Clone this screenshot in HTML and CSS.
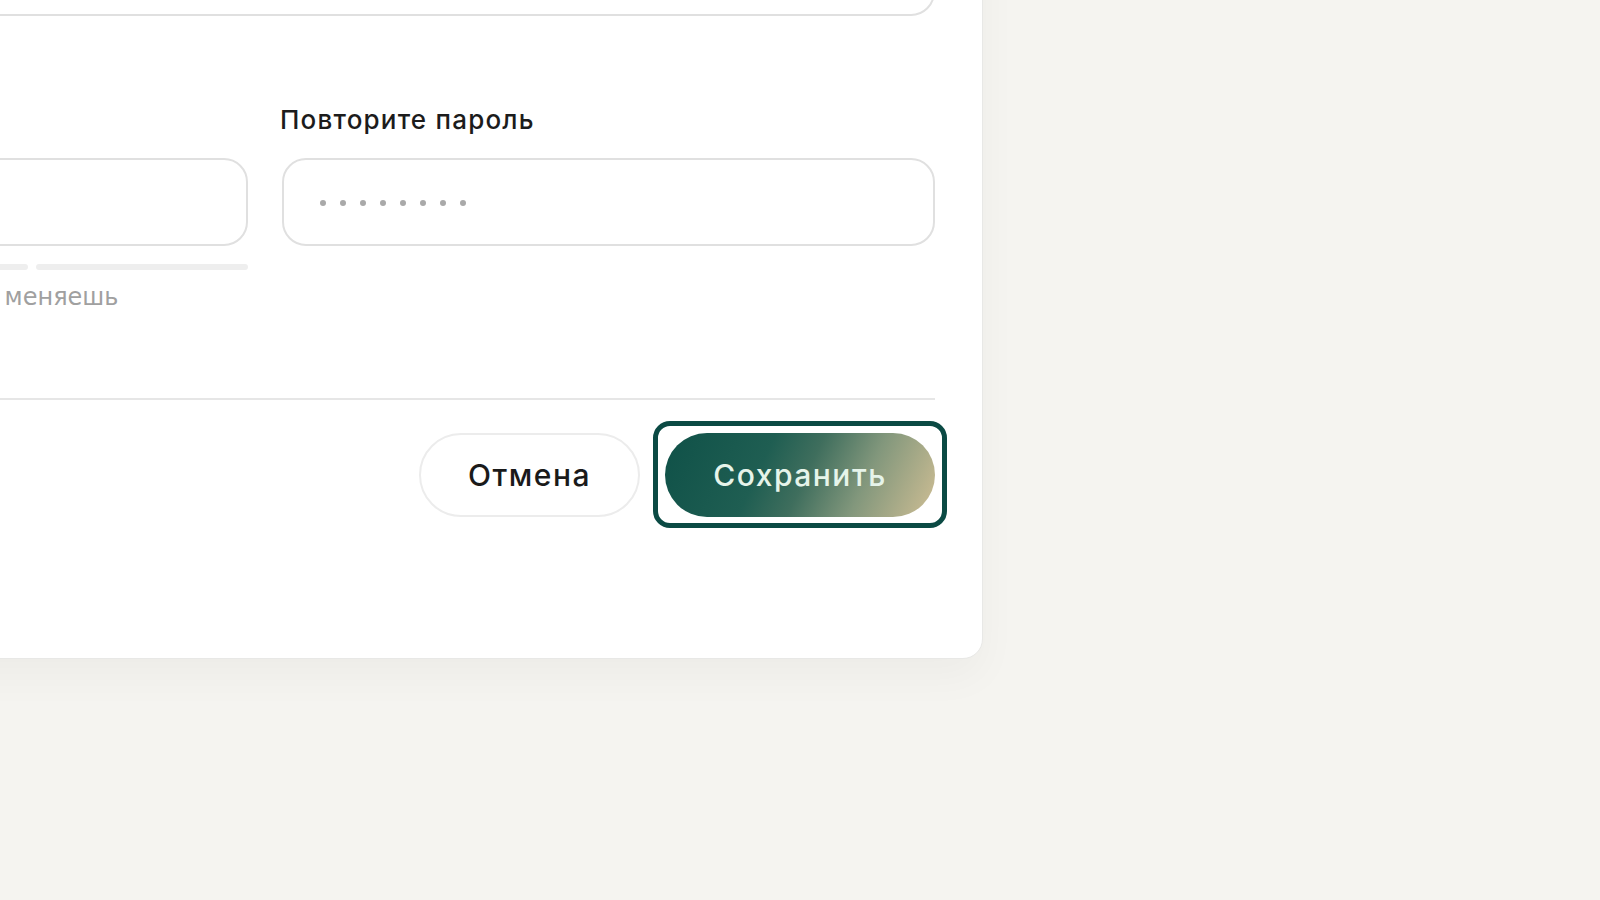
FILE: index.html
```html
<!DOCTYPE html>
<html lang="ru">
<head>
<meta charset="utf-8">
<title>Смена пароля</title>
<link rel="stylesheet" href="styles.css">
</head>
<body>
<div class="stage">
  <section class="card">
    <div class="field">
      <label class="label">Текущий пароль</label>
      <div class="input"></div>
    </div>
    <div class="grid">
      <div class="field">
        <label class="label">Новый пароль</label>
        <div class="input">
          <span class="dots"><i></i><i></i><i></i><i></i><i></i><i></i><i></i><i></i></span>
        </div>
        <div class="strength">
          <span class="seg seg-on"></span>
          <span class="seg"></span>
          <span class="seg"></span>
        </div>
        <p class="hint">Не используй пароль, который меняешь</p>
      </div>
      <div class="field">
        <label class="label">Повторите пароль</label>
        <div class="input">
          <span class="dots"><i></i><i></i><i></i><i></i><i></i><i></i><i></i><i></i></span>
        </div>
      </div>
    </div>
    <div class="divider"></div>
    <div class="actions">
      <button class="btn btn-cancel" type="button">Отмена</button>
      <button class="btn btn-save" type="button">Сохранить</button>
    </div>
  </section>
</div>
</body>
</html>
```

FILE: styles.css
```css
* { box-sizing: border-box; }
html, body { margin: 0; padding: 0; }
body {
  width: 1600px;
  height: 900px;
  overflow: hidden;
  background: #f5f4f0;
  font-family: Inter, "Noto Sans", "Liberation Sans", sans-serif;
  color: #1c1c1c;
}
.stage {
  display: flex;
}
.card {
  flex: none;
  width: 1436px;
  margin-left: -453px;
  margin-top: -174px;
  background: #ffffff;
  border: 1px solid #e8e8e6;
  border-radius: 20px;
  padding: 47px 47px 141px;
  box-shadow: 0 18px 40px rgba(0, 0, 0, 0.035);
}
.field {
  display: flex;
  flex-direction: column;
}
.label {
  display: block;
  font-size: 26px;
  line-height: 32px;
  font-weight: 500;
  color: #1c1c1c;
  margin-bottom: 22px;
  margin-left: -2px;
  letter-spacing: 1.2px;
}
.input {
  height: 88px;
  border: 2px solid #e0e0e0;
  border-radius: 24px;
  background: #fff;
  display: flex;
  align-items: center;
  padding-left: 36px;
}
.dots {
  display: flex;
  gap: 14px;
  margin-top: 2px;
}
.dots i {
  width: 6px;
  height: 6px;
  border-radius: 50%;
  background: #a9a9a9;
}
.grid {
  display: grid;
  grid-template-columns: 1fr 1fr;
  column-gap: 34px;
  margin-top: 88px;
}
.strength {
  display: grid;
  grid-template-columns: repeat(3, 1fr);
  gap: 8px;
  margin-top: 18px;
}
.seg {
  height: 6px;
  border-radius: 3px;
  background: #eeeeee;
}
.seg-on {
  background: #e0a36a;
}
.hint {
  margin: 11px 0 0;
  font-family: "DejaVu Sans", Inter, sans-serif;
  font-size: 24px;
  line-height: 32px;
  color: #a0a0a0;
  white-space: nowrap;
  word-spacing: 2.5px;
}
.divider {
  height: 2px;
  background: #e6e6e6;
  margin-top: 85px;
}
.actions {
  display: flex;
  justify-content: flex-end;
  gap: 25px;
  margin-top: 33px;
}
.btn {
  height: 84px;
  border-radius: 42px;
  font-family: Inter, "Noto Sans", "Liberation Sans", sans-serif;
  font-size: 30px;
  font-weight: 500;
  letter-spacing: 1.5px;
  padding: 0;
  cursor: pointer;
}
.btn-cancel {
  width: 221px;
  background: #ffffff;
  border: 2px solid #ececec;
  color: #1a1a1a;
}
.btn-save {
  position: relative;
  width: 270px;
  border: none;
  color: #e6f4ea;
  background: linear-gradient(115deg, #0f5148 0%, #1f5e52 36%, #3f6e5d 52%, #82977c 72%, #cfbe94 100%);
}
.btn-save::before {
  content: "";
  position: absolute;
  inset: -12px -12px -11px;
  border: 5px solid #0b4a44;
  border-radius: 17px;
  pointer-events: none;
}
```
